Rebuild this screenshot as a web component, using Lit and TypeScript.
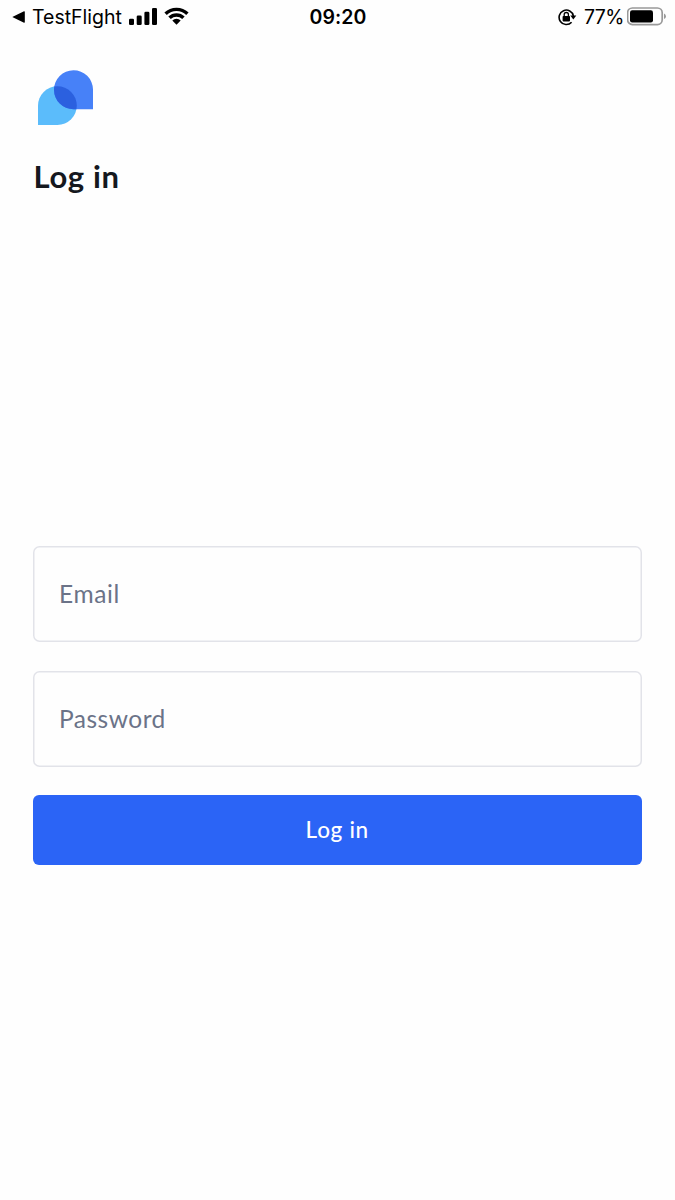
import { LitElement, html, css, svg } from "lit";
import { customElement } from "lit/decorators.js";

@customElement("status-bar")
class StatusBar extends LitElement {
  static styles = css`
    :host {
      display: grid;
      grid-template-columns: 1fr auto 1fr;
      height: 34px;
      padding: 0 9px 0 12px;
      box-sizing: border-box;
      font: 400 19.5px/35px Inter, sans-serif;
      color: #000;
    }
    svg { display: block; flex: none; }
    .left, .right { display: flex; align-items: flex-start; white-space: nowrap; }
    .right { justify-content: flex-end; }
    .back { margin-right: 7px; }
    .app { width: 97px; letter-spacing: 0; }
    .signal { margin-right: 7px; }
    .time { font-weight: 600; letter-spacing: 0.1px; margin-left: -2px; }
    .lock { margin-right: 7px; }
    .percent { width: 43px; letter-spacing: -0.6px; }
  `;
  render() {
    return html`
      <div class="left">
        <svg class="back" width="13" height="34" viewBox="0 0 13 34"><path d="M0.3 17 L12 11.2 Q12.8 11 12.8 12 V22 Q12.8 23 12 22.8Z" /></svg>
        <span class="app">TestFlight</span>
        <svg class="signal" width="28" height="34" viewBox="0 0 28 34">
          ${[[0, 18.7], [7.7, 15.5], [15.4, 11.8], [23, 8]].map(
            ([x, y]) => svg`<rect x=${x} y=${y} width="5" height=${25 - y} rx="1.3" />`
          )}
        </svg>
        <svg width="25" height="34" viewBox="0 0 25 34">
          <path d="M0.4 12.6 A17.4 17.4 0 0 1 24.6 12.6 L22.2 15 A13.8 13.8 0 0 0 2.8 15Z" />
          <path d="M4.3 16.5 A11.7 11.7 0 0 1 20.7 16.5 L18.2 19 A8.1 8.1 0 0 0 6.8 19Z" />
          <path d="M8.3 20.5 A6 6 0 0 1 16.7 20.5 L12.5 24.8Z" />
        </svg>
      </div>
      <div class="time">09:20</div>
      <div class="right">
        <svg class="lock" width="19" height="34" viewBox="0 0 19 34">
          <path d="M13.6 22.2 A7.2 7.2 0 1 1 15.4 16" fill="none" stroke="#000" stroke-width="1.6" />
          <path d="M12.3 15.6 H18.3 L15.3 19.6Z" />
          <rect x="4.6" y="16" width="7.4" height="5.4" rx="0.8" />
          <path d="M6.2 16.5 V14.6 A2.1 2.1 0 0 1 10.4 14.6 V16.5" fill="none" stroke="#000" stroke-width="1.3" />
        </svg>
        <span class="percent">77%</span>
        <svg width="39" height="34" viewBox="0 0 39 34">
          <rect x="0.6" y="8" width="34.6" height="16.6" rx="4.8" fill="none" stroke="#999" stroke-width="1.7" />
          <rect x="3" y="10.2" width="23" height="12.2" rx="2.2" />
          <path d="M37 13.6 Q39 14.6 39 16.4 Q39 18.2 37 19.1Z" fill="#999" />
        </svg>
      </div>
    `;
  }
}

@customElement("app-root")
class AppRoot extends LitElement {
  static styles = css`
    :host {
      display: block;
      height: 1200px;
      background: #fefefe;
      font-family: Lato, sans-serif;
    }
    .screen { padding: 36px 32.5px 0; }
    .logo { display: block; margin-left: 5px; }
    h1 {
      margin: 29px 0 0 1px;
      height: 44px;
      font: 700 31px/44px Lato, sans-serif;
      letter-spacing: 0.65px;
      color: #15181e;
    }
    form { display: flex; flex-direction: column; margin-top: 347.5px; }
    input {
      box-sizing: border-box;
      width: 609.5px;
      height: 96px;
      margin: 0 0 29px;
      padding: 0 26.5px;
      border: 0;
      box-shadow: inset 0 0 0 1.5px #e2e3e9;
      border-radius: 6.5px;
      outline: none;
      background: #fefefe;
      font: 400 24.5px Lato, sans-serif;
      color: #15181e;
    }
    input::placeholder { color: #6b7388; opacity: 1; }
    .email { letter-spacing: 0.6px; }
    .password { letter-spacing: 0.5px; margin-bottom: 28px; }
    button {
      width: 609.5px;
      height: 70px;
      padding: 0;
      border: 0;
      border-radius: 6px;
      background: #2b64f6;
      color: #fff;
      font: 500 22.5px/70px Lato, sans-serif;
      letter-spacing: 0.7px;
    }
  `;
  render() {
    return html`
      <status-bar></status-bar>
      <main class="screen">
        <svg class="logo" width="55" height="55" viewBox="0 0 55 55">
          <defs><clipPath id="bubble"><path d="M0 55 V35.6 A19.4 19.4 0 1 1 19.4 55Z" /></clipPath></defs>
          <path d="M0 55 V35.6 A19.4 19.4 0 1 1 19.4 55Z" fill="#5bbcfb" />
          <path d="M55 39.2 V19.6 A19.5 19.5 0 1 0 35.5 39.2Z" fill="#4781f8" />
          <path d="M55 39.2 V19.6 A19.5 19.5 0 1 0 35.5 39.2Z" fill="#2b60df" clip-path="url(#bubble)" />
        </svg>
        <h1>Log in</h1>
        <form @submit=${(e: Event) => e.preventDefault()}>
          <input class="email" type="email" placeholder="Email" aria-label="Email" />
          <input class="password" type="password" placeholder="Password" aria-label="Password" />
          <button type="submit">Log in</button>
        </form>
      </main>
    `;
  }
}
